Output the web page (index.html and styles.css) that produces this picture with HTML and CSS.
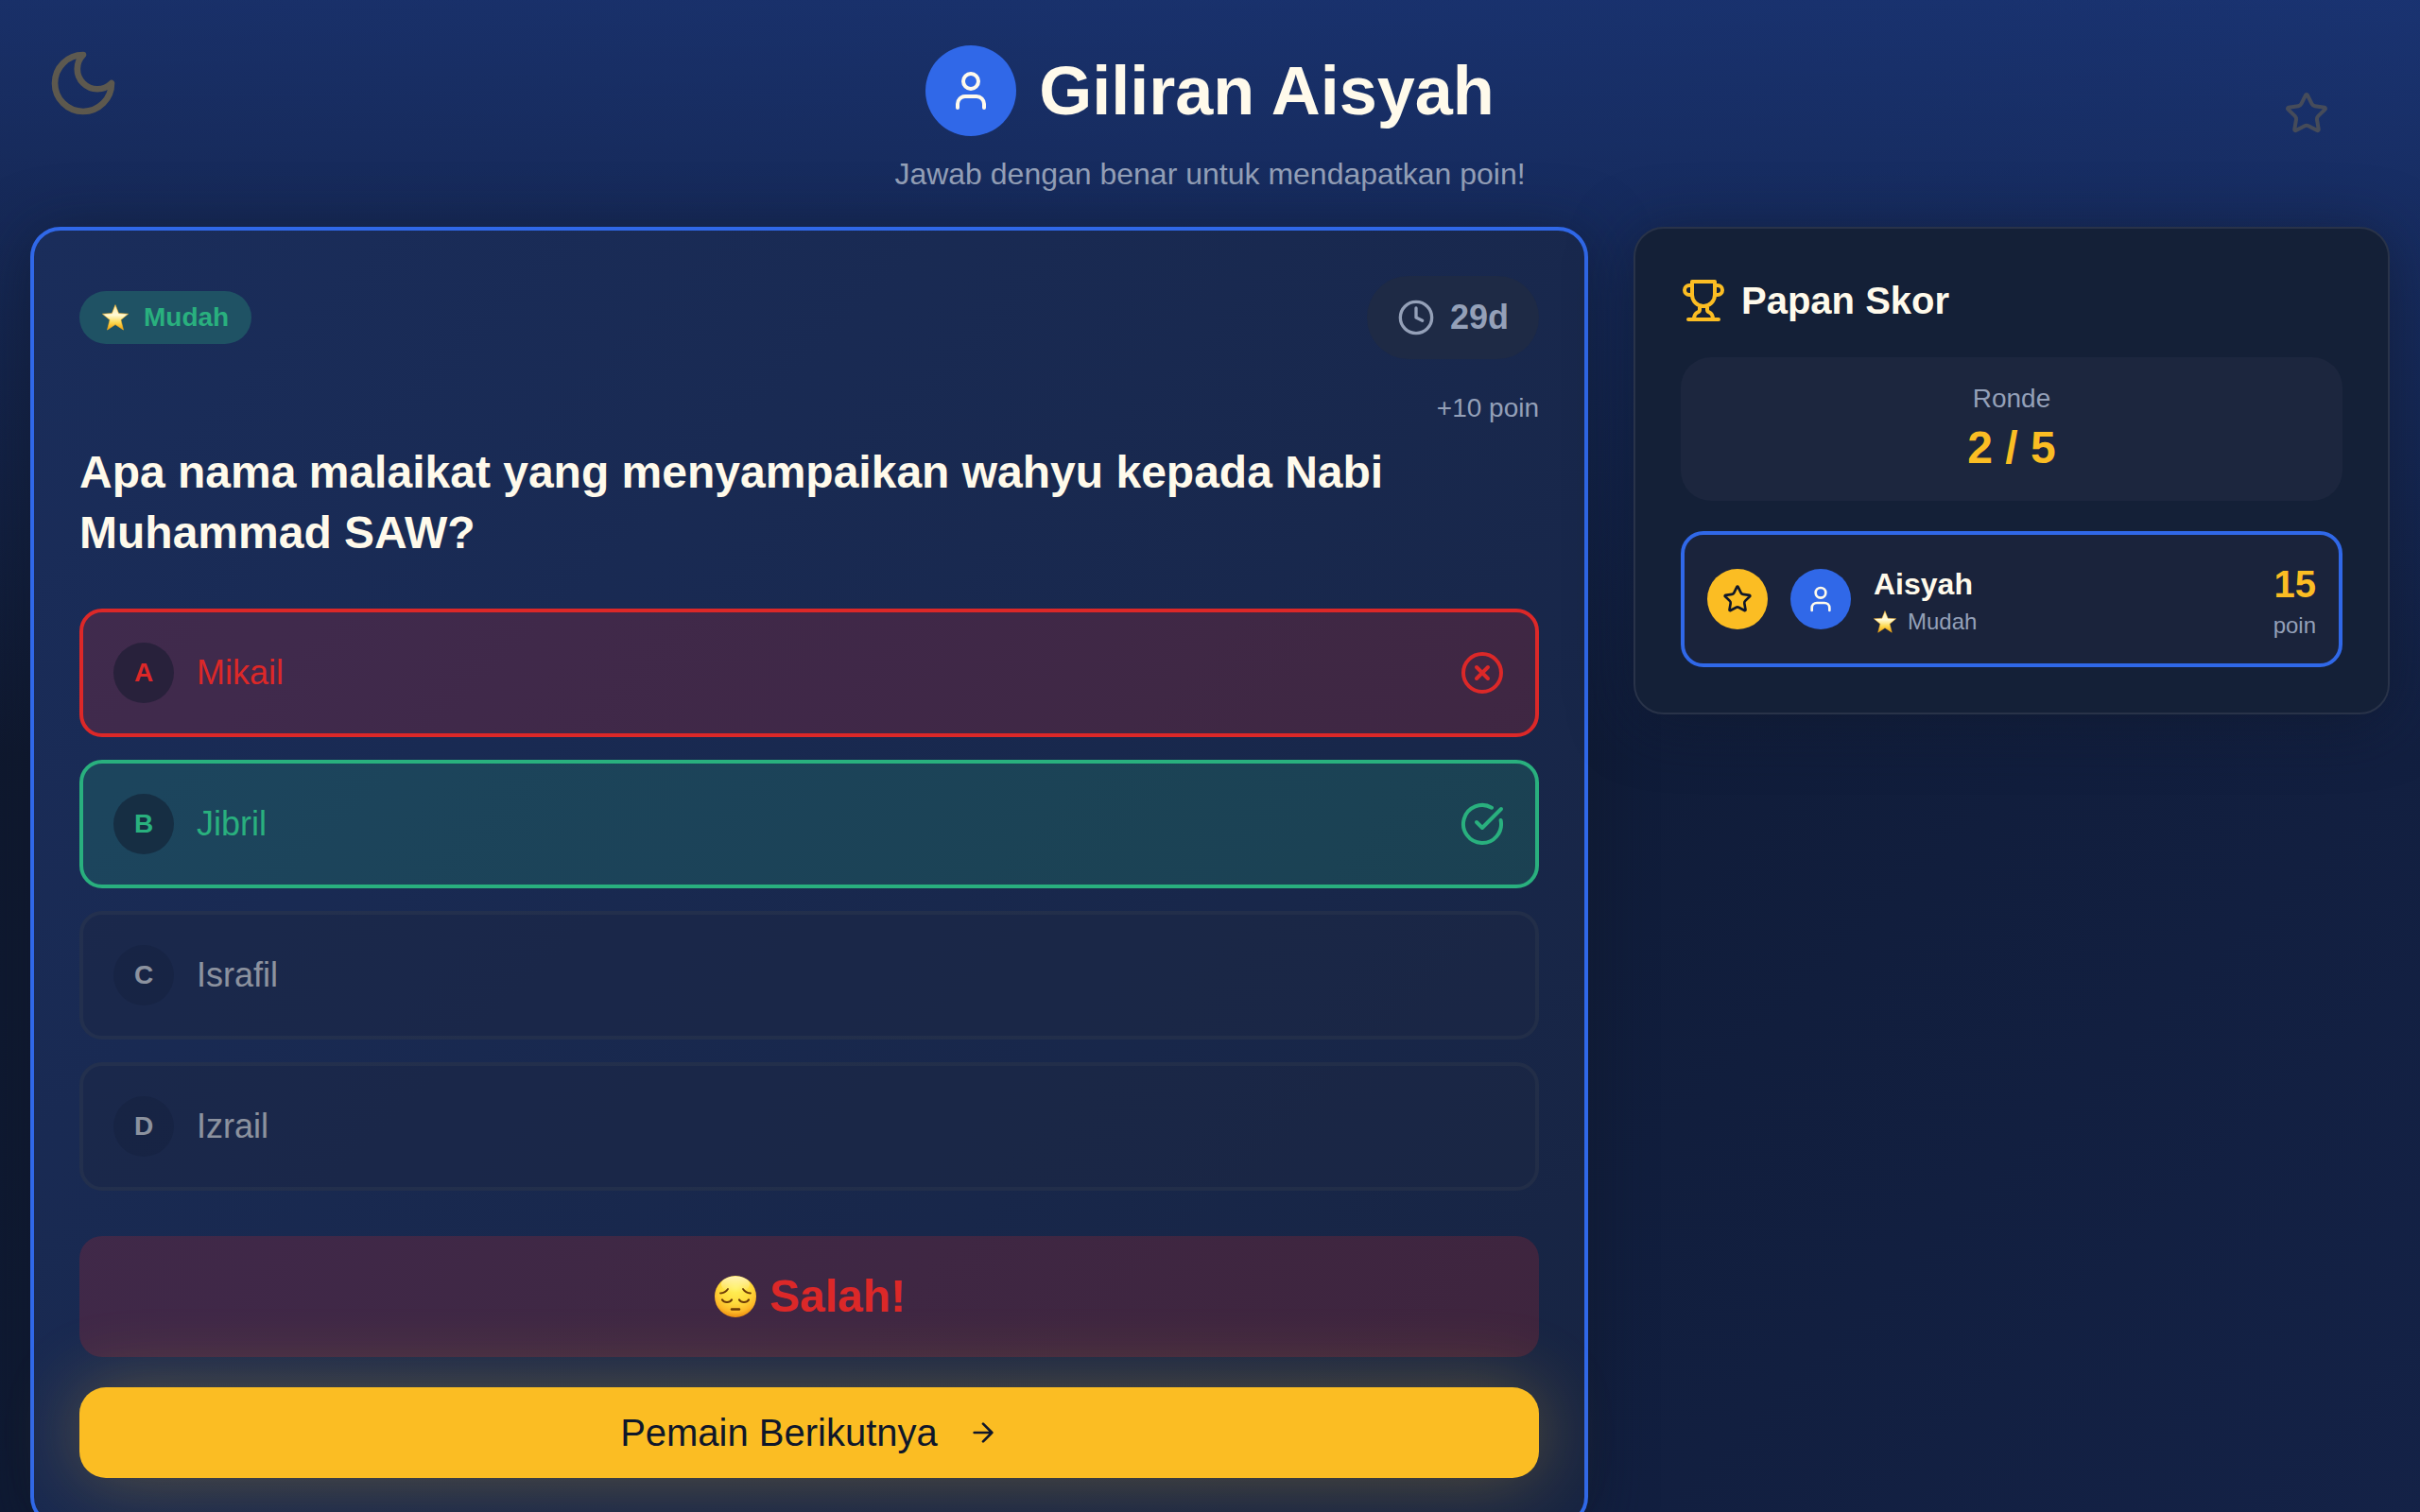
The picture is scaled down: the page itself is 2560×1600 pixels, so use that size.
FILE: index.html
```html
<!DOCTYPE html>
<html lang="id">
<head>
  <meta charset="UTF-8" />
  <meta name="viewport" content="width=device-width, initial-scale=1.0" />
  <title>Giliran Aisyah</title>
  <link rel="stylesheet" href="styles.css">
</head>
<body>
  <!-- shared icons -->
  <svg class="sprite" aria-hidden="true">
    <defs>
      <linearGradient id="gold" x1="0" y1="0" x2="0" y2="1">
        <stop offset="0" stop-color="#ffe9a0" />
        <stop offset="0.4" stop-color="#fffbd8" />
        <stop offset="0.7" stop-color="#fddb55" />
        <stop offset="1" stop-color="#f29f05" />
      </linearGradient>
      <radialGradient id="face" cx="0.5" cy="0.3" r="0.72">
        <stop offset="0" stop-color="#fff25a" />
        <stop offset="0.5" stop-color="#ffdc3c" />
        <stop offset="0.8" stop-color="#fcb827" />
        <stop offset="1" stop-color="#e8860c" />
      </radialGradient>
      <linearGradient id="shine" x1="0" y1="0" x2="0" y2="1">
        <stop offset="0" stop-color="#fff" stop-opacity="0.6" />
        <stop offset="1" stop-color="#fff" stop-opacity="0" />
      </linearGradient>
    </defs>
    <symbol id="icon-user" viewBox="0 0 24 24">
      <path d="M19 21v-2a4 4 0 0 0-4-4H9a4 4 0 0 0-4 4v2" />
      <circle cx="12" cy="7" r="4" />
    </symbol>
    <symbol id="icon-star" viewBox="0 0 24 24">
      <path d="M11.525 2.295a.53.53 0 0 1 .95 0l2.31 4.679a2.123 2.123 0 0 0 1.595 1.16l5.166.756a.53.53 0 0 1 .294.904l-3.736 3.638a2.123 2.123 0 0 0-.611 1.878l.882 5.14a.53.53 0 0 1-.771.56l-4.618-2.428a2.122 2.122 0 0 0-1.973 0L6.396 21.01a.53.53 0 0 1-.77-.56l.881-5.139a2.122 2.122 0 0 0-.611-1.879L2.16 9.795a.53.53 0 0 1 .294-.906l5.165-.755a2.122 2.122 0 0 0 1.597-1.16z" />
    </symbol>
    <symbol id="emoji-star" viewBox="0 0 28 28">
      <path d="M14 .6l3.600 9 10 .6-7.700 6.300 2.600 10.600L14 21.500l-8.500 5.600 2.600-10.600L.4 10.200l10-.6z" fill="url(#gold)" stroke="#f3ae25" stroke-width="0.6" stroke-linejoin="round" />
    </symbol>
  </svg>

  <div class="game">
    <svg class="icon deco deco-moon" viewBox="0 0 24 24"><path d="M12 3a6 6 0 0 0 9 9 9 9 0 1 1-9-9Z" /></svg>
    <svg class="icon deco deco-star"><use href="#icon-star" /></svg>

    <header class="turn">
      <div class="turn-title">
        <span class="avatar avatar-lg"><svg class="icon"><use href="#icon-user" /></svg></span>
        <h1>Giliran Aisyah</h1>
      </div>
      <p>Jawab dengan benar untuk mendapatkan poin!</p>
    </header>

    <main class="board">
      <section class="question-card">
        <div class="card-top">
          <span class="badge"><svg class="emoji"><use href="#emoji-star" /></svg>Mudah</span>
          <span class="timer">
            <svg class="icon" viewBox="0 0 24 24"><circle cx="12" cy="12" r="10" /><path d="M12 6v6l4 2" /></svg>
            29d
          </span>
        </div>
        <p class="reward">+10 poin</p>
        <h2 class="question">Apa nama malaikat yang menyampaikan wahyu kepada Nabi Muhammad SAW?</h2>

        <div class="options">
          <button class="option wrong" disabled>
            <span class="letter">A</span>
            <span class="answer">Mikail</span>
            <svg class="icon" viewBox="0 0 24 24"><circle cx="12" cy="12" r="10" /><path d="m15 9-6 6M9 9l6 6" /></svg>
          </button>
          <button class="option correct" disabled>
            <span class="letter">B</span>
            <span class="answer">Jibril</span>
            <svg class="icon" viewBox="0 0 24 24"><path d="M21.801 10A10 10 0 1 1 17 3.335" /><path d="m9 11 3 3L22 4" /></svg>
          </button>
          <button class="option muted" disabled>
            <span class="letter">C</span>
            <span class="answer">Israfil</span>
          </button>
          <button class="option muted" disabled>
            <span class="letter">D</span>
            <span class="answer">Izrail</span>
          </button>
        </div>

        <div class="feedback">
          <svg class="face" viewBox="0 0 48 48">
            <circle cx="24" cy="24" r="22" fill="url(#face)" />
            <ellipse cx="24" cy="11" rx="15" ry="8.500" fill="url(#shine)" />
            <g fill="none" stroke="#6b3a06" stroke-width="1.800" stroke-linecap="round">
              <path d="M8 20.500c3.500-.3 6.500-2 8-4.500M40 20.500c-3.500-.3-6.500-2-8-4.500" />
              <path d="M10 27.500c2 3.300 8 3.300 10 0M28 27.500c2 3.300 8 3.300 10 0" stroke-width="2.200" />
              <path d="M20 37.500h8" stroke-width="2.400" />
            </g>
          </svg>
          <strong>Salah!</strong>
        </div>

        <button class="next-btn">
          Pemain Berikutnya
          <svg class="icon" viewBox="0 0 24 24"><path d="M5 12h14M12 5l7 7-7 7" /></svg>
        </button>
      </section>

      <aside class="scoreboard">
        <h2>
          <svg class="icon" viewBox="0 0 24 24"><path d="M6 9H4.5a2.500 2.500 0 0 1 0-5H6M18 9h1.500a2.500 2.500 0 0 0 0-5H18M4 22h16M10 14.660V17c0 .55-.47.98-.97 1.210C7.850 18.750 7 20.240 7 22M14 14.660V17c0 .55.47.98.97 1.210C16.150 18.750 17 20.240 17 22M18 2H6v7a6 6 0 0 0 12 0V2Z" /></svg>
          Papan Skor
        </h2>
        <div class="round">
          <p>Ronde</p>
          <strong>2 / 5</strong>
        </div>
        <div class="player">
          <span class="avatar rank"><svg class="icon"><use href="#icon-star" /></svg></span>
          <span class="avatar"><svg class="icon"><use href="#icon-user" /></svg></span>
          <div class="player-info">
            <h3>Aisyah</h3>
            <p><svg class="emoji"><use href="#emoji-star" /></svg>Mudah</p>
          </div>
          <div class="player-score">
            <strong>15</strong>
            <span>poin</span>
          </div>
        </div>
      </aside>
    </main>
  </div>
</body>
</html>
```

FILE: styles.css
```css
* {
  box-sizing: border-box;
  margin: 0;
  padding: 0;
}
body {
  font-family: 'Liberation Sans', Arial, sans-serif;
  color: #fffaeb;
  background: #0f172a;
}
button {
  font-family: inherit;
  color: inherit;
  border: none;
}
.sprite {
  position: absolute;
  width: 0;
  height: 0;
}
.game {
  position: relative;
  min-height: 100vh;
  padding: 48px 32px 32px;
  background:
    linear-gradient(180deg, rgba(37, 78, 180, 0.45), rgba(37, 78, 180, 0) 800px),
    linear-gradient(135deg, #0f172a, #0f1b36 50%, #142247);
}
.icon {
  width: 48px;
  height: 48px;
  fill: none;
  stroke: currentColor;
  stroke-width: 2;
  stroke-linecap: round;
  stroke-linejoin: round;
  flex-shrink: 0;
}
.emoji {
  width: 28px;
  height: 28px;
  flex-shrink: 0;
}
.deco {
  position: absolute;
  color: #fbbd23;
}
.deco-moon {
  top: 48px;
  left: 48px;
  width: 80px;
  height: 80px;
  opacity: 0.3;
}
.deco-star {
  top: 96px;
  right: 96px;
  opacity: 0.2;
}

/* header */
.turn {
  text-align: center;
  margin-bottom: 32px;
}
.turn-title {
  display: flex;
  align-items: center;
  justify-content: center;
  gap: 24px;
  margin-bottom: 16px;
}
.turn h1 {
  font-size: 72px;
  line-height: 80px;
}
.turn p {
  font-size: 32px;
  line-height: 48px;
  color: #94a0b8;
}
.avatar {
  display: flex;
  align-items: center;
  justify-content: center;
  width: 64px;
  height: 64px;
  border-radius: 50%;
  background: #3068e8;
  flex-shrink: 0;
}
.avatar .icon {
  width: 32px;
  height: 32px;
}
.avatar-lg {
  width: 96px;
  height: 96px;
}
.avatar-lg .icon {
  width: 48px;
  height: 48px;
}
.rank {
  background: #fbbd23;
  color: #0f172a;
}

/* layout */
.board {
  display: grid;
  grid-template-columns: repeat(3, 1fr);
  gap: 48px;
  align-items: start;
}
.question-card {
  grid-column: span 2;
  padding: 48px;
  border: 4px solid #3068e8;
  border-radius: 32px;
  background: linear-gradient(135deg, #1a2d5b, #172442);
  box-shadow: 0 8px 64px rgba(15, 23, 42, 0.6);
}

/* question */
.card-top {
  display: flex;
  align-items: center;
  justify-content: space-between;
  margin-bottom: 32px;
}
.badge {
  display: flex;
  align-items: center;
  gap: 16px;
  padding: 8px 24px;
  border-radius: 28px;
  font-size: 28px;
  line-height: 40px;
  font-weight: bold;
  color: #29b07e;
  background: #1f5264;
}
.timer {
  display: flex;
  align-items: center;
  gap: 16px;
  padding: 16px 32px;
  border-radius: 44px;
  font-size: 36px;
  line-height: 56px;
  font-weight: bold;
  color: #94a0b8;
  background: #1e2a45;
}
.timer .icon {
  width: 40px;
  height: 40px;
}
.reward {
  font-size: 28px;
  line-height: 40px;
  text-align: right;
  color: #94a0b8;
  margin-bottom: 16px;
}
.question {
  font-size: 48px;
  line-height: 64px;
  margin-bottom: 48px;
}
.options {
  display: grid;
  gap: 24px;
  margin-bottom: 48px;
}
.option {
  display: flex;
  align-items: center;
  gap: 24px;
  padding: 32px;
  border: 4px solid #2d364a;
  border-radius: 24px;
  text-align: left;
  font-size: 36px;
  background: #1c2744;
}
.option .letter {
  display: flex;
  align-items: center;
  justify-content: center;
  width: 64px;
  height: 64px;
  border-radius: 50%;
  font-size: 28px;
  font-weight: bold;
  background: rgba(15, 23, 42, 0.5);
}
.option .answer {
  flex: 1;
}
.wrong {
  color: #dc2828;
  border-color: #dc2828;
  background: rgba(220, 40, 40, 0.2);
}
.correct {
  color: #29b07e;
  border-color: #29b07e;
  background: rgba(41, 176, 126, 0.2);
}
.muted {
  opacity: 0.5;
}
.feedback {
  display: flex;
  align-items: center;
  justify-content: center;
  gap: 12px;
  padding: 32px;
  margin-bottom: 32px;
  border-radius: 24px;
  font-size: 48px;
  line-height: 64px;
  color: #dc2828;
  background: rgba(220, 40, 40, 0.2);
}
.face {
  width: 48px;
  height: 48px;
}
.next-btn {
  display: flex;
  align-items: center;
  justify-content: center;
  gap: 32px;
  width: 100%;
  height: 96px;
  border-radius: 28px;
  font-size: 40px;
  color: #0f172a;
  background: #fbbd23;
  box-shadow: 0 0 80px rgba(251, 189, 35, 0.3);
  cursor: pointer;
}
.next-btn .icon {
  width: 32px;
  height: 32px;
}

/* scoreboard */
.scoreboard {
  padding: 48px;
  border: 2px solid #293349;
  border-radius: 32px;
  background: #142037;
  box-shadow: 0 8px 64px rgba(15, 23, 42, 0.6);
}
.scoreboard h2 {
  display: flex;
  align-items: center;
  gap: 16px;
  font-size: 40px;
  line-height: 56px;
  margin-bottom: 32px;
}
.scoreboard h2 .icon {
  color: #fbbd23;
}
.round {
  padding: 24px;
  margin-bottom: 32px;
  border-radius: 32px;
  text-align: center;
  background: #1c263e;
}
.round p {
  font-size: 28px;
  line-height: 40px;
  color: #94a0b8;
}
.round strong {
  display: block;
  font-size: 48px;
  line-height: 64px;
  color: #fbbd23;
}
.player {
  display: flex;
  align-items: center;
  gap: 24px;
  padding: 24px;
  border: 4px solid #3068e8;
  border-radius: 24px;
  background: #1a233b;
}
.player-info {
  flex: 1;
}
.player-info h3 {
  font-size: 32px;
  line-height: 48px;
}
.player-info p {
  display: flex;
  align-items: center;
  gap: 12px;
  font-size: 24px;
  line-height: 32px;
  color: #94a0b8;
}
.player-info .emoji {
  width: 24px;
  height: 24px;
}
.player-score {
  text-align: right;
}
.player-score strong {
  display: block;
  font-size: 40px;
  line-height: 56px;
  color: #fbbd23;
}
.player-score span {
  display: block;
  font-size: 24px;
  line-height: 32px;
  color: #94a0b8;
}
```
